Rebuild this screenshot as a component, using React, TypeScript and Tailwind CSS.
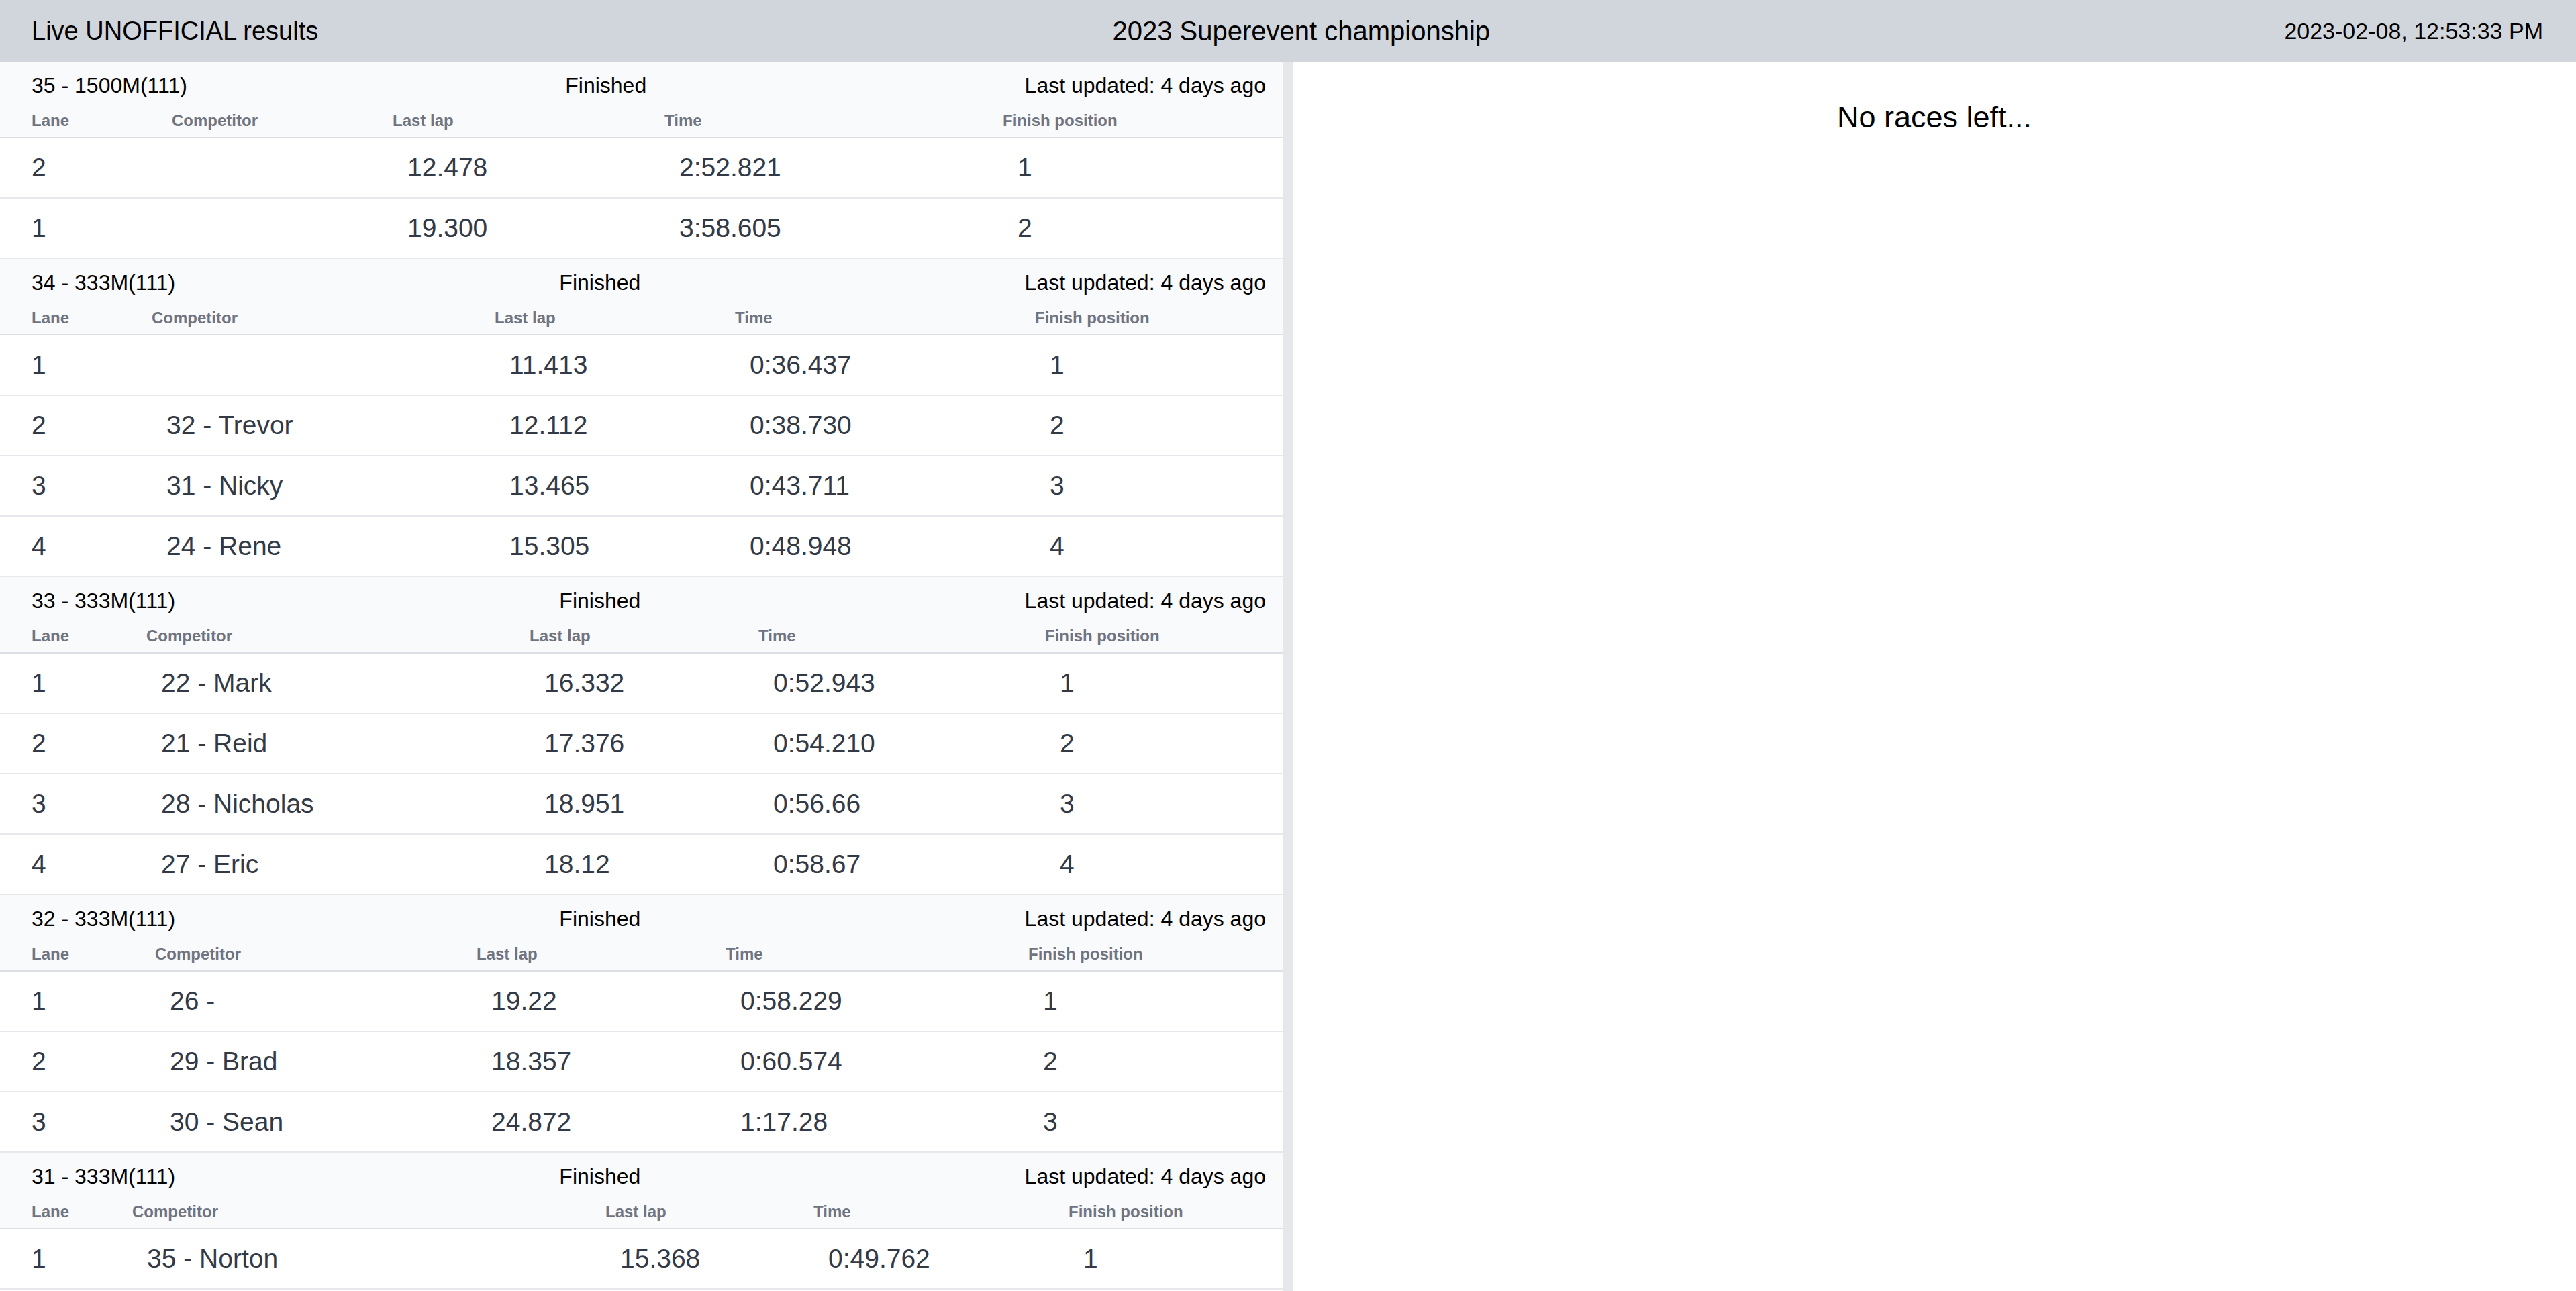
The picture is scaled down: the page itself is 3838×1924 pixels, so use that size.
type Race = {
  title: string;
  cols: string;
  rows: string[][];
};

const races: Race[] = [
  {
    title: '35 - 1500M(111)',
    cols: 'grid-cols-[209px_329px_405px_504px_1fr]',
    rows: [
      ['2', '', '12.478', '2:52.821', '1'],
      ['1', '', '19.300', '3:58.605', '2'],
    ],
  },
  {
    title: '34 - 333M(111)',
    cols: 'grid-cols-[179px_511px_358px_447px_1fr]',
    rows: [
      ['1', '', '11.413', '0:36.437', '1'],
      ['2', '32 - Trevor', '12.112', '0:38.730', '2'],
      ['3', '31 - Nicky', '13.465', '0:43.711', '3'],
      ['4', '24 - Rene', '15.305', '0:48.948', '4'],
    ],
  },
  {
    title: '33 - 333M(111)',
    cols: 'grid-cols-[171px_571px_341px_427px_1fr]',
    rows: [
      ['1', '22 - Mark', '16.332', '0:52.943', '1'],
      ['2', '21 - Reid', '17.376', '0:54.210', '2'],
      ['3', '28 - Nicholas', '18.951', '0:56.66', '3'],
      ['4', '27 - Eric', '18.12', '0:58.67', '4'],
    ],
  },
  {
    title: '32 - 333M(111)',
    cols: 'grid-cols-[184px_479px_371px_451px_1fr]',
    rows: [
      ['1', '26 -', '19.22', '0:58.229', '1'],
      ['2', '29 - Brad', '18.357', '0:60.574', '2'],
      ['3', '30 - Sean', '24.872', '1:17.28', '3'],
    ],
  },
  {
    title: '31 - 333M(111)',
    cols: 'grid-cols-[150px_705px_310px_380px_1fr]',
    rows: [['1', '35 - Norton', '15.368', '0:49.762', '1']],
  },
];

const labels = ['Lane', 'Competitor', 'Last lap', 'Time', 'Finish position'];

function RaceBlock({ race }: { race: Race }) {
  return (
    <section>
      {/* race header */}
      <div className="h-[114px] bg-gray-50 border-b-2 border-[#dcdee3]">
        <div className="h-[70px] flex items-center justify-between pl-[47px] pr-[25px] text-[32px] text-black">
          <span>{race.title}</span>
          <span>Finished</span>
          <span>Last updated: 4 days ago</span>
        </div>
        <div className={`h-[36px] grid items-center pl-[47px] text-[24px] font-semibold text-[#6f7480] ${race.cols}`}>
          {labels.map((l) => (
            <span key={l}>{l}</span>
          ))}
        </div>
      </div>

      {race.rows.map((row, i) => (
        <div
          key={i}
          className={`h-[90px] grid items-center pl-[47px] bg-white border-b-2 border-[#e7e8ec] text-[39px] text-[#333a45] ${race.cols}`}
        >
          {row.map((cell, j) => (
            <span key={j} className={j === 0 ? '' : 'pl-[22px]'}>
              {cell}
            </span>
          ))}
        </div>
      ))}
    </section>
  );
}

export default function App() {
  return (
    <div className="h-screen w-full flex flex-col overflow-hidden bg-white font-['Liberation_Sans',Arial,sans-serif]">
      {/* top bar */}
      <header className="h-[92px] flex-shrink-0 flex items-center justify-between pl-[47px] pr-[49px] bg-gray-300 text-black">
        <span className="text-[38px]">Live UNOFFICIAL results</span>
        <span className="text-[40px]">2023 Superevent championship</span>
        <span className="text-[34px]">2023-02-08, 12:53:33 PM</span>
      </header>

      <div className="flex-1 flex min-h-0">
        {/* results list */}
        <div className="w-[1911px] flex-shrink-0 overflow-hidden">
          {races.map((r) => (
            <RaceBlock key={r.title} race={r} />
          ))}
        </div>
        {/* scroll track */}
        <div className="w-[15px] flex-shrink-0 bg-[#e6e7eb]" />

        {/* upcoming races */}
        <div className="flex-1 pt-[60px] flex justify-center">
          <p className="text-[45px] leading-none text-black">No races left...</p>
        </div>
      </div>
    </div>
  );
}
